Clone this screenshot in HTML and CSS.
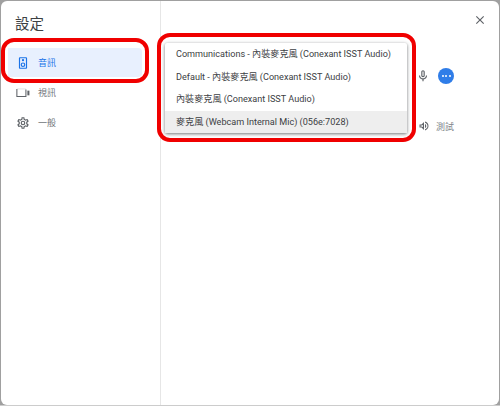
FILE: index.html
```html
<!DOCTYPE html>
<html lang="zh-Hant">
<head>
  <meta charset="UTF-8" />
  <title>設定</title>
  <link rel="stylesheet" href="styles.css">
</head>
<body>
  <div class="dialog">
    <aside class="sidebar">
      <h1 class="title">設定</h1>
      <nav class="nav">
        <div class="nav-item active">
          <svg class="nav-icon" viewBox="0 0 24 24" fill="#1a73e8"><path d="M17 2H7c-1.1 0-2 .9-2 2v16c0 1.1.9 2 2 2h10c1.1 0 2-.9 2-2V4c0-1.1-.9-2-2-2zm0 18H7V4h10v16zM12 9a2 2 0 1 0 0-4 2 2 0 0 0 0 4zm0 2a4 4 0 1 0 0 8 4 4 0 0 0 0-8zm0 6a2 2 0 1 1 0-4 2 2 0 0 1 0 4z"/></svg>
          <span>音訊</span>
        </div>
        <div class="nav-item">
          <svg class="nav-icon" viewBox="0 0 24 24" fill="none" stroke="#5f6368"><path d="M2 5H17" stroke-width="1" opacity="0.3"/><path d="M1.5 5V18H17V6" stroke-width="1.8"/><rect x="19.5" y="8" width="3.5" height="8" fill="#5f6368" stroke="none"/></svg>
          <span>視訊</span>
        </div>
        <div class="nav-item">
          <svg class="nav-icon" viewBox="0 0 24 24" fill="#5f6368"><path d="M19.43 12.98c.04-.32.07-.64.07-.98s-.03-.66-.07-.98l2.11-1.65c.19-.15.24-.42.12-.64l-2-3.46c-.12-.22-.39-.3-.61-.22l-2.49 1c-.52-.4-1.08-.73-1.69-.98l-.38-2.65A.49.49 0 0 0 14 2h-4c-.25 0-.46.18-.49.42l-.38 2.65c-.61.25-1.17.59-1.69.98l-2.49-1c-.23-.09-.49 0-.61.22l-2 3.46c-.13.22-.07.49.12.64l2.11 1.65c-.04.32-.07.65-.07.98s.03.66.07.98l-2.11 1.65c-.19.15-.24.42-.12.64l2 3.46c.12.22.39.3.61.22l2.49-1c.52.4 1.08.73 1.69.98l.38 2.65c.03.24.24.42.49.42h4c.25 0 .46-.18.49-.42l.38-2.65c.61-.25 1.17-.59 1.69-.98l2.49 1c.23.09.49 0 .61-.22l2-3.46c.12-.22.07-.49-.12-.64l-2.11-1.65zM17.45 11.27c.04.31.05.52.05.73s-.02.43-.05.73l-.14 1.13.89.7 1.08.84-.7 1.21-1.27-.51-1.04-.42-.9.68c-.43.32-.84.56-1.25.73l-1.06.43-.16 1.13-.2 1.35h-1.4l-.19-1.35-.16-1.13-1.06-.43c-.43-.18-.83-.41-1.23-.71l-.91-.7-1.06.43-1.27.51-.7-1.21 1.08-.84.89-.7-.14-1.13c-.03-.31-.05-.54-.05-.74s.02-.43.05-.73l.14-1.13-.89-.7-1.08-.84.7-1.21 1.27.51 1.04.42.9-.68c.43-.32.84-.56 1.25-.73l1.06-.43.16-1.13.2-1.35h1.39l.19 1.35.16 1.13 1.06.43c.43.18.83.41 1.23.71l.91.7 1.06-.43 1.27-.51.7 1.21-1.07.85-.89.7.14 1.13zM12 8a4 4 0 1 0 0 8 4 4 0 0 0 0-8zm0 6a2 2 0 1 1 0-4 2 2 0 0 1 0 4z"/></svg>
          <span>一般</span>
        </div>
      </nav>
    </aside>
    <main class="content">
      <div class="close">
        <svg viewBox="0 0 24 24" fill="#5f6368"><path d="M19 6.41 17.59 5 12 10.59 6.41 5 5 6.41 10.59 12 5 17.59 6.41 19 12 13.41 17.59 19 19 17.59 13.41 12z"/></svg>
      </div>
      <div class="row mic-row">
        <svg class="row-icon" viewBox="0 0 24 24" fill="#5f6368"><path d="M12 14c1.66 0 3-1.34 3-3V5c0-1.66-1.34-3-3-3S9 3.34 9 5v6c0 1.66 1.34 3 3 3zm-1-9c0-.55.45-1 1-1s1 .45 1 1v6c0 .55-.45 1-1 1s-1-.45-1-1V5zm6 6c0 2.76-2.24 5-5 5s-5-2.24-5-5H5c0 3.53 2.61 6.43 6 6.92V21h2v-3.08c3.39-.49 6-3.39 6-6.92h-2z"/></svg>
        <div class="more"><i></i><i></i><i></i></div>
      </div>
      <div class="row test-row">
        <svg class="speaker-icon" viewBox="0 0 24 24" fill="#5f6368"><path d="M3 9v6h4l5 5V4L7 9H3zm7 .83v4.34L7.83 13H5v-2h2.83L10 9.83zM14 7.97v8.05c1.48-.73 2.5-2.25 2.5-4.02 0-1.77-1.02-3.29-2.5-4.03zM14 3.23v2.06c2.89.86 5 3.54 5 6.71s-2.11 5.85-5 6.71v2.06c4.01-.91 7-4.49 7-8.77s-2.99-7.86-7-8.77z"/></svg>
        <span class="test-label">測試</span>
      </div>
    </main>
  </div>

  <ul class="menu">
    <li>Communications - 內裝麥克風 (Conexant ISST Audio)</li>
    <li>Default - 內裝麥克風 (Conexant ISST Audio)</li>
    <li>內裝麥克風 (Conexant ISST Audio)</li>
    <li class="selected">麥克風 (Webcam Internal Mic) (056e:7028)</li>
  </ul>

  <div class="mark mark-nav"></div>
  <div class="mark mark-menu"></div>
</body>
</html>
```

FILE: styles.css
```css
* {
  margin: 0;
  padding: 0;
  box-sizing: border-box;
}

body {
  width: 500px;
  height: 406px;
  overflow: hidden;
  padding: 1px 1px 0 1px;
  background: #a0a0a0;
  border-bottom: 1px solid #cccccc;
  font-family: Roboto, "Noto Sans CJK TC", sans-serif;
  color: #3c4043;
}

.dialog {
  display: flex;
  height: 404px;
  background: #fff;
  border-radius: 6px;
}

.sidebar {
  width: 160px;
  border-right: 1px solid #e6e6e6;
}

.title {
  padding: 14px 0 0 14px;
  height: 47px;
  font-size: 14.5px;
  line-height: 20px;
  font-weight: 400;
  color: #3c4043;
}

.nav-item {
  display: flex;
  align-items: center;
  gap: 8px;
  width: 134px;
  height: 29px;
  margin: 0 0 1px 7px;
  padding-left: 8px;
  border-radius: 0 4px 4px 0;
  font-size: 9px;
  color: #70757a;
}

.nav-item.active {
  background: #e8f0fe;
  color: #1a73e8;
}

.nav-icon {
  width: 14px;
  height: 14px;
  flex: none;
}

.content {
  flex: 1;
  display: flex;
  flex-direction: column;
  align-items: flex-end;
}

.close {
  height: 38px;
  padding: 12px 12px 0 0;
}

.close svg {
  display: block;
  width: 14px;
  height: 14px;
}

.row {
  display: flex;
  align-items: center;
  height: 20px;
  padding-right: 45px;
}

.mic-row {
  gap: 8px;
  margin-top: 27px;
}

.more {
  display: flex;
  align-items: center;
  justify-content: center;
  gap: 1.5px;
  width: 16px;
  height: 16px;
  border-radius: 50%;
  background: #2f7de8;
}

.more i {
  width: 2px;
  height: 2px;
  border-radius: 50%;
  background: #fff;
}

.test-row {
  gap: 6px;
  margin-top: 30px;
}

.row-icon {
  width: 14px;
  height: 14px;
  flex: none;
}

.speaker-icon {
  width: 12px;
  height: 12px;
  flex: none;
}

.test-label {
  font-size: 9px;
  color: #80868b;
}

.menu {
  position: absolute;
  left: 165px;
  top: 43px;
  width: 242px;
  height: 90px;
  list-style: none;
  background: #fff;
  border-radius: 2px;
  box-shadow: 0 1px 3px rgba(60, 64, 67, 0.55), 0 1px 4px rgba(60, 64, 67, 0.25);
}

.menu li {
  height: 22.5px;
  line-height: 22.5px;
  padding-left: 11px;
  font-size: 9.1px;
  white-space: nowrap;
  color: #3c4043;
}

.menu li.selected {
  background: #eeeeee;
}

.mark {
  position: absolute;
  border: 4px solid #f00000;
  border-radius: 13px;
}

.mark-nav {
  left: 1px;
  top: 38px;
  width: 148px;
  height: 45px;
}

.mark-menu {
  left: 157px;
  top: 33px;
  width: 259px;
  height: 109px;
}
```
